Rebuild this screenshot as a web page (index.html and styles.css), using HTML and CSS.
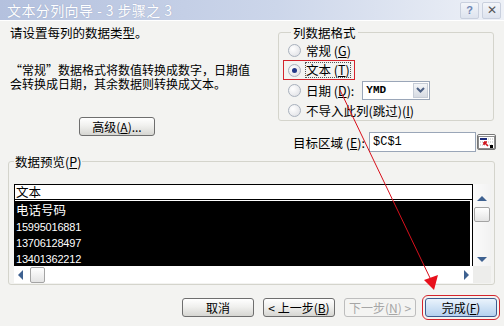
FILE: index.html
```html
<!DOCTYPE html>
<html lang="zh-CN">
<head>
  <meta charset="UTF-8">
  <title>文本分列向导 - 3 步骤之 3</title>
  <link rel="stylesheet" href="styles.css">
</head>
<body>

  <div class="dialog">
    <div class="titlebar">
      <span class="title">文本分列向导 - 3 步骤之 3</span>
      <div class="caption-btns">
        <span class="cap help">?</span>
        <span class="cap close">✕</span>
      </div>
    </div>

    <div class="content">
      <div class="top">
        <div class="intro">
          <p>请设置每列的数据类型。</p>
          <p class="note">“常规”数据格式将数值转换成数字，日期值</p>
          <p class="note2">会转换成日期，其余数据则转换成文本。</p>
          <button class="btn adv">高级(<u>A</u>)...</button>
        </div>

        <div class="side">
          <fieldset class="group format">
            <legend>列数据格式</legend>
            <div class="radio"><span class="dot"></span><span>常规 (<u>G</u>)</span></div>
            <div class="radio marked"><span class="dot on"></span><span class="focus">文本 (<u>T</u>)</span></div>
            <div class="radio"><span class="dot"></span><span>日期 (<u>D</u>):</span>
              <div class="combo">
                <span class="combo-val">YMD</span>
                <span class="combo-btn">
                  <svg width="9" height="6" viewBox="0 0 9 6"><path d="M1 1 L4.5 4.5 L8 1" fill="none" stroke="#4d6185" stroke-width="2"/></svg>
                </span>
              </div>
            </div>
            <div class="radio"><span class="dot"></span><span>不导入此列(跳过)(<u>I</u>)</span></div>
          </fieldset>

          <div class="dest">
            <label>目标区域 (<u>E</u>):</label>
            <div class="field">$C$1</div>
            <span class="pick">
              <svg width="17" height="13" viewBox="0 0 17 13">
                <rect x="0.5" y="0.5" width="16" height="12" fill="#fff" stroke="#8c8c8c"/>
                <rect x="2" y="2" width="7" height="2" fill="#1b2a7a"/>
                <path d="M10 3 H15 M2 6 H15 M2 9 H7 M11 9 H15" stroke="#b8b8b8" stroke-dasharray="1 1"/>
                <path d="M6 6 L10 10 M6 6 L6 9 M6 6 L9 6" stroke="#d0141c" stroke-width="1.6"/>
                <rect x="12" y="9" width="3" height="3" fill="#000"/>
              </svg>
            </span>
          </div>
        </div>
      </div>

      <fieldset class="group preview">
        <legend>数据预览(<u>P</u>)</legend>
        <div class="viewer">
          <div class="sheet">
            <div class="head">文本</div>
            <div class="rows">
              <div class="row cn">电话号码</div>
              <div class="row">15995016881</div>
              <div class="row">13706128497</div>
              <div class="row">13401362212</div>
            </div>
          </div>
          <div class="vscroll">
            <span class="arr up"></span>
            <span class="thumb"></span>
            <span class="arr down"></span>
          </div>
          <div class="hscroll">
            <span class="arr left"></span>
            <span class="thumb"></span>
            <span class="arr right"></span>
          </div>
          <div class="corner"></div>
        </div>
      </fieldset>

      <div class="actions">
        <button class="btn">取消</button>
        <button class="btn">&lt; 上一步(<u>B</u>)</button>
        <button class="btn" disabled>下一步(<u>N</u>) &gt;</button>
        <button class="btn primary">完成(<u>F</u>)</button>
      </div>
    </div>

    <svg class="pointer" width="504" height="326" viewBox="0 0 504 326">
      <line x1="340" y1="90" x2="431" y2="280" stroke="#d8101c" stroke-width="1"/>
      <polygon points="434,290 424,280 438,275" fill="#e8101c"/>
    </svg>
  </div>

</body>
</html>
```

FILE: styles.css
```css
:root {
  --face: #f3f3f1;
  --edge: #d4d4cc;
  --font: "Noto Sans CJK SC", "Liberation Sans", sans-serif;
}

body {
  margin: 0;
  font-family: var(--font);
  font-size: 12px;
  color: #000;
  background: var(--face);
}

.dialog {
  position: relative;
  width: 504px;
  height: 326px;
  overflow: hidden;
  background: var(--face);
}

/* title bar */

.titlebar {
  height: 20px;
  display: flex;
  align-items: center;
  justify-content: space-between;
  padding: 0 3px 0 7px;
  background: linear-gradient(to right, #b4c1de, #ccd6ea 55%, #eef1f7);
  border-bottom: 1px solid #fff;
}

.title {
  color: #fff;
  font-size: 14px;
  line-height: 20px;
  letter-spacing: 0.4px;
  text-shadow: 0 0 1px #8d9bbd;
}

.caption-btns {
  display: flex;
  gap: 3px;
}

.cap {
  width: 17px;
  height: 15px;
  display: flex;
  align-items: center;
  justify-content: center;
  background: linear-gradient(#f4f6fa, #dde3ee);
  border: 1px solid #c9d0de;
  border-radius: 2px;
  font-size: 11px;
  font-family: "Liberation Sans", sans-serif;
  font-weight: bold;
}

.help { color: #6f86b4; }
.close { color: #555; font-weight: normal; font-size: 12px; }

/* body */

.content {
  padding: 5px 10px 0 8px;
}

.content p {
  margin: 0;
  line-height: 14px;
  font-size: 12.5px;
}

.top {
  display: flex;
  justify-content: space-between;
}

.intro {
  padding-left: 2px;
}

.content .note,
.content .note2 {
  font-size: 12px;
  line-height: 13px;
}

.content .note {
  margin-top: 23px;
}

.content .note2 {
  margin-top: 1px;
}

.btn {
  font-family: var(--font);
  font-size: 12px;
  height: 19px;
  width: 72px;
  padding: 0;
  line-height: 17px;
  color: #000;
  border: 1px solid #6e6e6e;
  border-radius: 3px;
  background: linear-gradient(#ffffff, #f0f0ee 45%, #d6d6d2);
}

.adv {
  display: block;
  width: 76px;
  margin: 27px 0 0 69px;
}

.btn[disabled] {
  color: #a6a6a6;
  border-color: #bdbdbd;
  background: #f4f4f2;
}

.btn.primary {
  border-color: #3d5c8f;
  background: linear-gradient(#eaf3fc, #cfe2f5 50%, #b6d1ee);
  outline: 1px solid #d4242c;
  outline-offset: 2px;
}

/* group boxes */

.group {
  margin: 0;
  border: 1px solid var(--edge);
  border-radius: 3px;
}

.group legend {
  padding: 0 2px;
  line-height: 13px;
  font-size: 12.5px;
}

.side {
  width: 216px;
}

.format {
  padding: 1px 4px 0 4px;
}

.format legend {
  margin-left: 8px;
}

.radio {
  height: 20px;
  box-sizing: border-box;
  display: flex;
  align-items: center;
  gap: 5px;
  padding-left: 4px;
  border: 1px solid transparent;
  font-size: 12.5px;
}

.radio.marked {
  width: 72px;
  border-color: #d4242c;
}

.focus {
  outline: 1px dotted #555;
  outline-offset: 0;
  line-height: 14px;
}

.dot {
  width: 11px;
  height: 11px;
  border-radius: 50%;
  border: 1px solid #a9b1bd;
  background: radial-gradient(circle at 35% 35%, #ffffff, #dcdde2);
  display: flex;
  align-items: center;
  justify-content: center;
}

.dot.on::after {
  content: "";
  width: 5px;
  height: 5px;
  border-radius: 50%;
  background: #223888;
}

.combo {
  margin-left: 3px;
  width: 68px;
  height: 19px;
  box-sizing: border-box;
  border: 1px solid #9aa6b8;
  background: #fff;
  display: flex;
  align-items: center;
  justify-content: space-between;
}

.combo-val {
  font-family: "Liberation Mono", monospace;
  font-weight: bold;
  font-size: 11px;
  padding-left: 3px;
}

.combo-btn {
  width: 15px;
  height: 15px;
  margin-right: 1px;
  display: flex;
  align-items: center;
  justify-content: center;
  border: 1px solid #c6ccd6;
  box-sizing: border-box;
  background: linear-gradient(#f3f5f8, #d7dbe2);
}

.dest {
  margin-top: 11px;
  margin-right: -2px;
  display: flex;
  align-items: center;
  justify-content: flex-end;
  font-size: 12.5px;
}

.dest label {
  margin-right: 4px;
}

.field {
  width: 107px;
  height: 20px;
  box-sizing: border-box;
  border: 1px solid #9aa6b8;
  background: #fff;
  font-family: "Liberation Mono", monospace;
  font-size: 12px;
  line-height: 18px;
  padding-left: 3px;
}

.pick {
  width: 19px;
  height: 16px;
  margin-left: 1px;
  display: flex;
  align-items: center;
  justify-content: center;
  border: 1px solid #777;
  border-radius: 2px;
  background: linear-gradient(#fff, #e2e2e2);
  box-sizing: border-box;
}

/* preview */

.preview {
  margin-top: 3px;
  padding: 16px 3px 1px 5px;
}

.preview legend {
  margin-left: 0;
  padding: 0 1px;
}

.viewer {
  display: grid;
  grid-template-columns: 459px 18px;
  grid-template-rows: 82px 17px;
  background: #fff;
}

.sheet {
  border: 1px solid #000;
  border-bottom: 0;
  display: flex;
  flex-direction: column;
}

.head {
  height: 14px;
  line-height: 14px;
  border-bottom: 1px solid #000;
  font-size: 12.5px;
  padding-left: 1px;
}

.rows {
  flex: 1;
  margin: 1px 2px 0 0;
  background: #000;
  color: #fff;
  font-family: "Liberation Sans", sans-serif;
  font-size: 11px;
  padding-top: 1px;
}

.row {
  height: 16px;
  line-height: 16px;
  padding-left: 1px;
  letter-spacing: -0.2px;
}

.row.cn {
  font-family: var(--font);
  font-size: 12.5px;
  letter-spacing: 0;
  height: 17px;
}

.vscroll,
.hscroll {
  background: #f7f7f7;
  display: flex;
  align-items: center;
}

.vscroll {
  flex-direction: column;
  padding-top: 12px;
  background: linear-gradient(to right, #fbfbfb, #f2f2f2);
}

.vscroll .thumb {
  margin-top: 6px;
  width: 14px;
  height: 13px;
}

.vscroll .down {
  margin-top: auto;
  margin-bottom: 4px;
}

.hscroll {
  padding-left: 4px;
  background: #fff;
}

.hscroll .thumb {
  margin-left: 7px;
  width: 13px;
  height: 14px;
}

.hscroll .right {
  margin-left: auto;
  margin-right: 4px;
}

.corner {
  background: #ededeb;
}

.thumb {
  border: 1px solid #a4a4a4;
  border-radius: 2px;
  background: linear-gradient(#ffffff, #e4e4e4);
}

.arr {
  width: 0;
  height: 0;
  border: 5px solid transparent;
}

.arr.up { border-bottom-color: #3e6190; border-top-width: 0; }
.arr.down { border-top-color: #3e6190; border-bottom-width: 0; }
.arr.left { border-right-color: #3e6190; border-left-width: 0; }
.arr.right { border-left-color: #3e6190; border-right-width: 0; }

/* bottom buttons */

.actions {
  margin: 13px -3px 0 0;
  display: flex;
  justify-content: flex-end;
  gap: 9px;
}

/* annotation arrow lying over the dialog */

.pointer {
  position: absolute;
  left: 0;
  top: 0;
  pointer-events: none;
}
```
